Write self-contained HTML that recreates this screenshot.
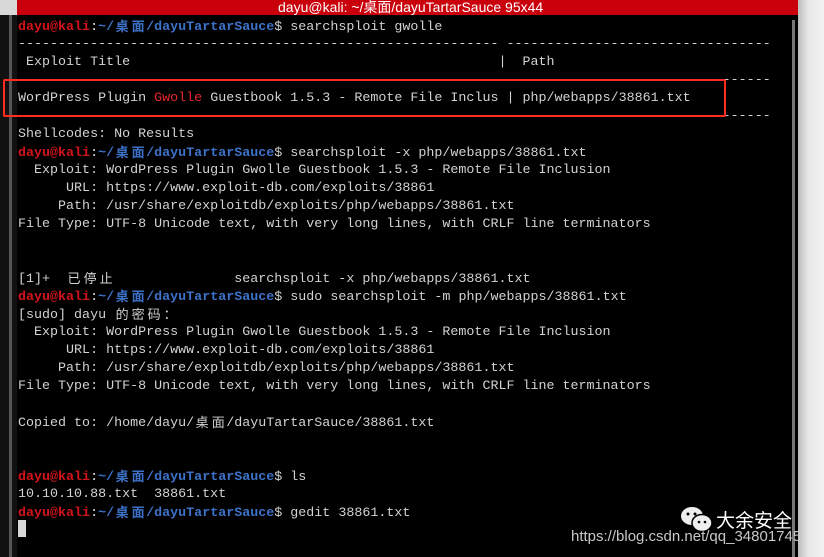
<!DOCTYPE html>
<html><head><meta charset="utf-8"><style>
body{margin:0;width:824px;height:557px;overflow:hidden;background:#000;position:relative;font-family:"Liberation Mono","Noto Sans CJK SC",monospace;}
#title{position:absolute;left:17px;top:0;width:781px;height:15px;background:#c9000b;color:#fff;font:14px "Liberation Sans","Noto Sans CJK SC",sans-serif;line-height:14px;overflow:hidden}
#title span{position:absolute;left:261px;top:0;}
#lt{position:absolute;left:0;top:0;width:17px;height:15px;background:#d8d8d8;}
#ls{position:absolute;left:0;top:15px;width:17px;height:542px;background:#111;}
#ls:after{content:"";position:absolute;left:9px;top:0;width:3px;height:542px;background:#555;}
#rs{position:absolute;left:798px;top:0;width:26px;height:557px;background:linear-gradient(90deg,#bdbdbd,#e8e8e8 40%,#f2f2f2);}
#sb{position:absolute;left:792px;top:20px;width:3px;height:537px;background:#777;}
#t{position:absolute;left:18px;top:18px;color:#d2d2d2;font-size:13.35px;}
#t div{height:18px;line-height:18px;white-space:pre;overflow:visible}
.r{color:#d4141a;font-weight:bold}.b{color:#3d72c9;font-weight:bold}.w{color:#e6e6e6}
.c{display:inline-block;width:16.02px;line-height:1;vertical-align:baseline;text-align:center;font-family:"Noto Sans CJK SC",sans-serif;font-size:13px;position:relative;top:0.5px}
.g{color:#e8262b}
#box{position:absolute;left:3px;top:79px;width:719px;height:34px;border:2px solid #ff2c22;border-radius:2px;}
#cur{position:absolute;left:18px;top:520px;width:8px;height:17px;background:#d8d8d8;}
#wm{position:absolute;left:716px;top:506px;color:#fff;font:19px "Noto Sans CJK SC",sans-serif;line-height:28px}
#url{position:absolute;left:571px;top:528px;color:#c8c8c8;font:15px "Liberation Sans",sans-serif;}
</style></head><body>
<div id="lt"></div><div id="ls"></div>
<div id="title"><span>dayu@kali: ~/桌面/dayuTartarSauce 95x44</span></div>
<div id="rs"></div><div id="sb"></div>
<div id="t">
<div><span class="r">dayu@kali</span><span class="w">:</span><span class="b">~/<span class="c">桌</span><span class="c">面</span>/dayuTartarSauce</span>$ searchsploit gwolle</div>
<div>------------------------------------------------------------ ---------------------------------</div>
<div> Exploit Title                                              |  Path</div>
<div>                                                                                        ------</div>
<div>WordPress Plugin <span class="g">Gwolle</span> Guestbook 1.5.3 - Remote File Inclus | php/webapps/38861.txt</div>
<div>                                                                                        ------</div>
<div>Shellcodes: No Results</div>
<div><span class="r">dayu@kali</span><span class="w">:</span><span class="b">~/<span class="c">桌</span><span class="c">面</span>/dayuTartarSauce</span>$ searchsploit -x php/webapps/38861.txt</div>
<div>  Exploit: WordPress Plugin Gwolle Guestbook 1.5.3 - Remote File Inclusion</div>
<div>      URL: https://www.exploit-db.com/exploits/38861</div>
<div>     Path: /usr/share/exploitdb/exploits/php/webapps/38861.txt</div>
<div>File Type: UTF-8 Unicode text, with very long lines, with CRLF line terminators</div>
<div></div>
<div></div>
<div>[1]+  <span class="c">已</span><span class="c">停</span><span class="c">止</span>               searchsploit -x php/webapps/38861.txt</div>
<div><span class="r">dayu@kali</span><span class="w">:</span><span class="b">~/<span class="c">桌</span><span class="c">面</span>/dayuTartarSauce</span>$ sudo searchsploit -m php/webapps/38861.txt</div>
<div>[sudo] dayu <span class="c">的</span><span class="c">密</span><span class="c">码</span><span class="c">：</span></div>
<div>  Exploit: WordPress Plugin Gwolle Guestbook 1.5.3 - Remote File Inclusion</div>
<div>      URL: https://www.exploit-db.com/exploits/38861</div>
<div>     Path: /usr/share/exploitdb/exploits/php/webapps/38861.txt</div>
<div>File Type: UTF-8 Unicode text, with very long lines, with CRLF line terminators</div>
<div></div>
<div>Copied to: /home/dayu/<span class="c">桌</span><span class="c">面</span>/dayuTartarSauce/38861.txt</div>
<div></div>
<div></div>
<div><span class="r">dayu@kali</span><span class="w">:</span><span class="b">~/<span class="c">桌</span><span class="c">面</span>/dayuTartarSauce</span>$ ls</div>
<div>10.10.10.88.txt  38861.txt</div>
<div><span class="r">dayu@kali</span><span class="w">:</span><span class="b">~/<span class="c">桌</span><span class="c">面</span>/dayuTartarSauce</span>$ gedit 38861.txt</div>
</div>
<div id="box"></div>
<div id="cur"></div>
<svg style="position:absolute;left:680px;top:506px" width="34" height="28" viewBox="0 0 34 28"><ellipse cx="12" cy="10" rx="11" ry="9" fill="#eee"/><ellipse cx="22" cy="17" rx="10" ry="8.5" fill="#eee" stroke="#000" stroke-width="1.5"/><circle cx="8" cy="8" r="1.5" fill="#000"/><circle cx="15" cy="8" r="1.5" fill="#000"/><circle cx="19" cy="16" r="1.3" fill="#000"/><circle cx="25" cy="16" r="1.3" fill="#000"/></svg>
<div id="wm">大余安全</div>
<div id="url">https://blog.csdn.net/qq_34801745</div>
</body></html>
